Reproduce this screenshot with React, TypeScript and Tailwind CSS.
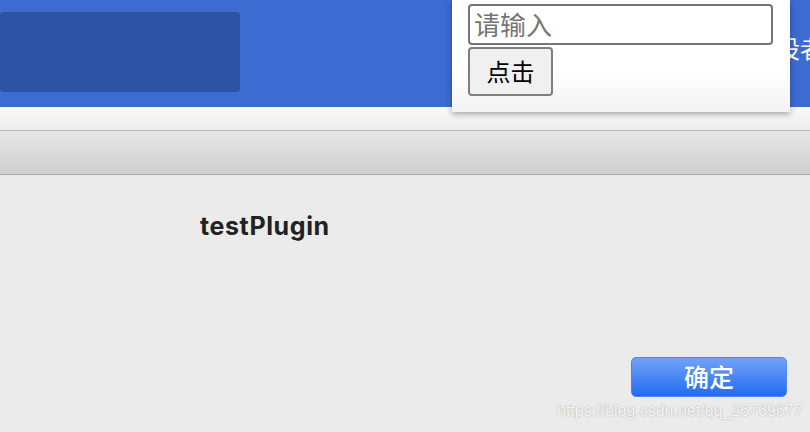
import React from 'react'

function Header() {
  return (
    <div className="relative h-[107px] bg-[#3c6bd1] flex items-start">
      <div className="mt-[12px] h-[80px] w-[240px] rounded-[4px] bg-[#2d53a5]" />
      <div className="ml-auto mt-[33px] mr-[-14px] text-[24px] leading-[32px] text-white">建设者</div>
    </div>
  )
}

function Popup() {
  return (
    <div className="absolute left-[452px] top-0 w-[338px] h-[112px] bg-gradient-to-b from-white from-60% to-[#f4f4f4] shadow-[0_2px_6px_rgba(0,0,0,0.35)] pl-[16px] pt-[4px]">
      <input
        placeholder="请输入"
        className="block w-[305px] h-[41px] rounded-[4px] border-2 border-[#767676] bg-white px-[4px] text-[26px] text-black placeholder:text-[#757575] outline-none"
      />
      <button className="mt-[2px] block w-[85px] h-[49px] rounded-[4px] border-2 border-[#7f7f7f] bg-[#f0f0f0] text-[24px] text-black">
        点击
      </button>
    </div>
  )
}

export default function App() {
  return (
    <div
      className="relative w-[810px] h-[432px] overflow-hidden flex flex-col bg-[#ebebeb]"
      style={{ fontFamily: '"Noto Sans", "Noto Sans CJK SC", sans-serif' }}
    >
      <Header />
      <div className="h-[24px] bg-gradient-to-b from-[#f9f9f9] to-[#ededed] border-b border-[#bcbcbc]" />
      <div className="h-[44px] bg-gradient-to-b from-[#e6e6e6] to-[#d0d0d0] border-b border-[#a8a8a8]" />
      <div className="flex-1 flex flex-col bg-[#ebebeb]">
        <div className="pl-[200px] pt-[36px] text-[25px] leading-[30px] font-bold tracking-[0.6px] text-[#222222]" style={{ fontFamily: 'Inter, sans-serif' }}>
          testPlugin
        </div>
        <div className="mt-auto mb-[35px] mr-[23px] self-end">
          <button className="w-[156px] h-[40px] rounded-[5px] border border-[#4f86ea] bg-gradient-to-b from-[#72a2f6] to-[#1f6af1] text-white text-[25px] leading-[30px] font-medium">
            确定
          </button>
        </div>
      </div>
      <Popup />
      <div className="absolute left-[557px] top-[401px] text-[16px] leading-[20px] text-[#f6f6f6] [text-shadow:0_0_1.5px_rgba(0,0,0,0.35)]" style={{ fontFamily: '"Liberation Sans", sans-serif' }}>
        https://blog.csdn.net/qq_26769677
      </div>
    </div>
  )
}
